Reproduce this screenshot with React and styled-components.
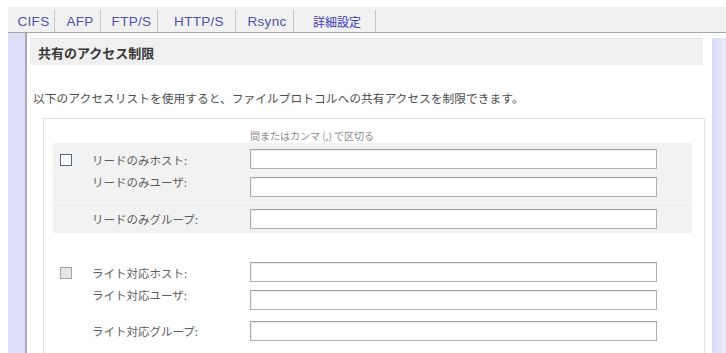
import React from "react";
import styled, { createGlobalStyle } from "styled-components";

const GlobalStyle = createGlobalStyle`
  html, body { margin: 0; padding: 0; background: #fff; }
  body { font-family: "Noto Sans CJK JP", "Noto Sans", sans-serif; }
  * { box-sizing: border-box; }
`;

const Page = styled.div`
  width: 726px;
  height: 353px;
  overflow: hidden;
  display: flex;
  flex-direction: column;
  background: #fff;
`;

const TabBar = styled.div`
  display: flex;
  margin: 7px 0 0 8px;
  height: 26px;
  background: #f1f1f1;
  border-bottom: 1px solid #a6a6a6;
`;

const Tab = styled.div`
  width: ${(p) => p.$w}px;
  margin-top: 3px;
  padding-left: 5px;
  display: flex;
  align-items: center;
  justify-content: center;
  border-right: 1px solid #c6c6c6;
  font-family: ${(p) =>
    p.$cjk ? '"Noto Sans CJK JP", sans-serif' : '"Liberation Sans", Arial, sans-serif'};
  font-size: ${(p) => (p.$cjk ? "12px" : "13.5px")};
  letter-spacing: ${(p) => (p.$cjk ? "0" : "0.3px")};
  color: ${(p) => (p.$cjk ? "#3a3ac0" : "#5050aa")};
`;

const Body = styled.div`
  flex: 1;
  display: flex;
  min-height: 0;
`;

const LeftRail = styled.div`
  width: 19px;
  margin-left: 8px;
  background: #dedef8;
  border-right: 2px solid #a9a9b9;
`;

const RightRail = styled.div`
  width: 14px;
  margin-top: 5px;
  background: linear-gradient(to right, #dadaf6, #ececfc);
`;

const Content = styled.div`
  flex: 1;
  display: flex;
  flex-direction: column;
  min-width: 0;
`;

const SectionHeader = styled.div`
  margin: 5px 9px 0 3px;
  height: 27px;
  padding-left: 8px;
  display: flex;
  align-items: center;
  background: #f0f0f0;
  border-top: 1px solid #e4e4e4;
  font-size: 13px;
  font-weight: bold;
  color: #383838;
`;

const Description = styled.div`
  margin: 26px 0 0 6px;
  line-height: 14px;
  font-size: 11.75px;
  color: #4c4c4c;
  white-space: nowrap;
`;

const ListBox = styled.div`
  flex: 1;
  margin: 13px 7px 0 16px;
  padding: 10px 12px 0 9px;
  border: 1px solid #e2e2e2;
  border-bottom: none;
`;

const Hint = styled.div`
  margin-left: 197px;
  line-height: 14px;
  font-size: 10px;
  color: #8a8a8a;
  white-space: nowrap;
`;

const Group = styled.div`
  margin-top: ${(p) => p.$gap}px;
  background: ${(p) => (p.$shaded ? "#f2f2f2" : "transparent")};
`;

const Row = styled.div`
  display: flex;
  align-items: ${(p) => (p.$center ? "center" : "flex-start")};
  padding: 6px 0 ${(p) => p.$padBottom}px 7px;
  border-bottom: ${(p) => (p.$divider ? "1px solid #fbfbfb" : "none")};
`;

const CheckSlot = styled.div`
  width: 12px;
  margin-right: 20px;
  flex: none;
`;

const CheckBox = styled.span`
  display: block;
  width: 12px;
  height: 12px;
  margin-top: 5px;
  border: 1px solid ${(p) => (p.$muted ? "#a0a4a8" : "#56697a")};
  background: ${(p) => (p.$muted ? "#e6e6e8" : "#fdfdfd")};
`;

const LabelCol = styled.div`
  width: 158px;
  flex: none;
  display: flex;
  flex-direction: column;
`;

const Label = styled.div`
  line-height: ${(p) => p.$lh}px;
  font-size: 11.5px;
  color: #5c5c5c;
  white-space: nowrap;
`;

const InputCol = styled.div`
  width: 407px;
  flex: none;
  display: flex;
  flex-direction: column;
  gap: 8px;
`;

const Field = styled.input`
  display: block;
  width: 407px;
  height: 20px;
  margin: 0;
  padding: 0 3px;
  border: 1px solid #aab0b6;
  border-top-color: #9ca2a8;
  background: #fff;
  box-shadow: inset 1px 1px 0 #efefef;
  outline: none;
`;

const tabs = [
  { t: "CIFS", w: 47 },
  { t: "AFP", w: 46 },
  { t: "FTP/S", w: 57 },
  { t: "HTTP/S", w: 78 },
  { t: "Rsync", w: 58 },
  { t: "詳細設定", w: 82, cjk: true },
];

const groups = [
  { prefix: "リードのみ", shaded: true, gap: 0, muted: false },
  { prefix: "ライト対応", shaded: false, gap: 23, muted: true },
];

function AccessGroup({ g }) {
  return (
    <Group $shaded={g.shaded} $gap={g.gap}>
      <Row $padBottom={5} $divider={g.shaded}>
        <CheckSlot>
          <CheckBox $muted={g.muted} role="checkbox" aria-checked="false" />
        </CheckSlot>
        <LabelCol>
          <Label $lh={22}>{g.prefix}ホスト:</Label>
          <Label $lh={22}>{g.prefix}ユーザ:</Label>
        </LabelCol>
        <InputCol>
          <Field type="text" />
          <Field type="text" />
        </InputCol>
      </Row>
      <Row $padBottom={4} $center>
        <CheckSlot />
        <LabelCol>
          <Label $lh={20}>{g.prefix}グループ:</Label>
        </LabelCol>
        <InputCol>
          <Field type="text" />
        </InputCol>
      </Row>
    </Group>
  );
}

export default function App() {
  return (
    <Page>
      <GlobalStyle />
      <TabBar>
        {tabs.map((t) => (
          <Tab key={t.t} $w={t.w} $cjk={t.cjk}>
            {t.t}
          </Tab>
        ))}
      </TabBar>
      <Body>
        <LeftRail />
        <Content>
          <SectionHeader>共有のアクセス制限</SectionHeader>
          <Description>
            以下のアクセスリストを使用すると、ファイルプロトコルへの共有アクセスを制限できます。
          </Description>
          <ListBox>
            <Hint>間またはカンマ (,) で区切る</Hint>
            {groups.map((g) => (
              <AccessGroup key={g.prefix} g={g} />
            ))}
          </ListBox>
        </Content>
        <RightRail />
      </Body>
    </Page>
  );
}
